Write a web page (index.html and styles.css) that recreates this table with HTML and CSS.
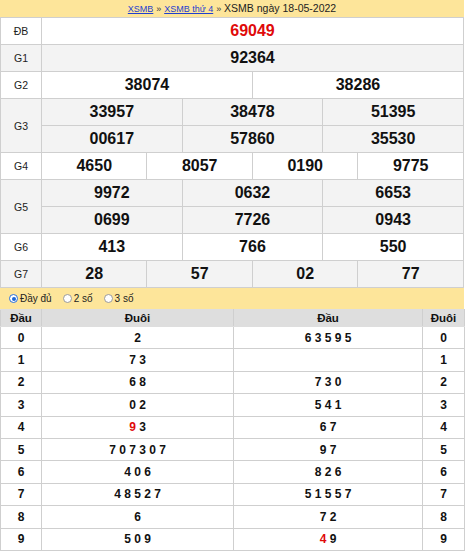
FILE: index.html
```html
<!DOCTYPE html>
<html lang="vi">
<head>
<meta charset="utf-8">
<title>XSMB ngày 18-05-2022</title>
<link rel="stylesheet" href="styles.css">
</head>
<body>
<div class="wrap">
  <div class="title">
    <a href="#" class="lnk">XSMB</a> <span class="sep">»</span> <a href="#" class="lnk">XSMB thứ 4</a> <span class="sep">»</span> <span class="ttl">XSMB ngày 18-05-2022</span>
  </div>
  <table class="kq">
    <colgroup><col class="c-lbl"><col span="12"></colgroup>
    <tr class="w"><td class="lbl">ĐB</td><td colspan="12" class="num db">69049</td></tr>
    <tr class="g"><td class="lbl">G1</td><td colspan="12" class="num">92364</td></tr>
    <tr class="w"><td class="lbl">G2</td><td colspan="6" class="num">38074</td><td colspan="6" class="num">38286</td></tr>
    <tr class="g"><td class="lbl" rowspan="2">G3</td><td colspan="4" class="num">33957</td><td colspan="4" class="num">38478</td><td colspan="4" class="num">51395</td></tr>
    <tr class="g"><td colspan="4" class="num">00617</td><td colspan="4" class="num">57860</td><td colspan="4" class="num">35530</td></tr>
    <tr class="w"><td class="lbl">G4</td><td colspan="3" class="num">4650</td><td colspan="3" class="num">8057</td><td colspan="3" class="num">0190</td><td colspan="3" class="num">9775</td></tr>
    <tr class="g"><td class="lbl" rowspan="2">G5</td><td colspan="4" class="num">9972</td><td colspan="4" class="num">0632</td><td colspan="4" class="num">6653</td></tr>
    <tr class="g"><td colspan="4" class="num">0699</td><td colspan="4" class="num">7726</td><td colspan="4" class="num">0943</td></tr>
    <tr class="w"><td class="lbl">G6</td><td colspan="4" class="num">413</td><td colspan="4" class="num">766</td><td colspan="4" class="num">550</td></tr>
    <tr class="g"><td class="lbl">G7</td><td colspan="3" class="num">28</td><td colspan="3" class="num">57</td><td colspan="3" class="num">02</td><td colspan="3" class="num">77</td></tr>
  </table>
  <div class="opts">
    <label class="opt"><span class="radio on"></span>Đầy đủ</label>
    <label class="opt"><span class="radio"></span>2 số</label>
    <label class="opt"><span class="radio"></span>3 số</label>
  </div>
  <table class="lt">
    <colgroup><col class="c1"><col class="c2"><col class="c3"><col class="c4"></colgroup>
    <tr class="hd"><th>Đầu</th><th>Đuôi</th><th>Đầu</th><th>Đuôi</th></tr>
    <tr><td>0</td><td>2</td><td>6 3 5 9 5</td><td>0</td></tr>
    <tr><td>1</td><td>7 3</td><td></td><td>1</td></tr>
    <tr><td>2</td><td>6 8</td><td>7 3 0</td><td>2</td></tr>
    <tr><td>3</td><td>0 2</td><td>5 4 1</td><td>3</td></tr>
    <tr><td>4</td><td><span class="red">9</span> 3</td><td>6 7</td><td>4</td></tr>
    <tr><td>5</td><td>7 0 7 3 0 7</td><td>9 7</td><td>5</td></tr>
    <tr><td>6</td><td>4 0 6</td><td>8 2 6</td><td>6</td></tr>
    <tr><td>7</td><td>4 8 5 2 7</td><td>5 1 5 5 7</td><td>7</td></tr>
    <tr><td>8</td><td>6</td><td>7 2</td><td>8</td></tr>
    <tr><td>9</td><td>5 0 9</td><td><span class="red">4</span> 9</td><td>9</td></tr>
  </table>
</div>
</body>
</html>
```
FILE: styles.css
```css
html, body {
  margin: 0;
  padding: 0;
  background: #fff;
}
body {
  font-family: "Liberation Sans", Arial, sans-serif;
  color: #111;
}
.wrap {
  width: 464px;
}
.title {
  background: #fde59a;
  height: 17px;
  line-height: 17px;
  text-align: center;
  font-size: 10.5px;
  color: #222;
  white-space: nowrap;
}
.title .lnk {
  color: #1e3fd0;
  text-decoration: underline;
  font-size: 9px;
}
.title .sep {
  font-size: 9px;
  color: #333;
}
table {
  border-collapse: collapse;
  width: 464px;
  table-layout: fixed;
}
.kq td {
  border: 1px solid #cfcfcf;
  height: 26px;
  padding: 0;
  text-align: center;
  vertical-align: middle;
}
.kq .c-lbl {
  width: 41px;
}
.kq tr.w td {
  background: #fff;
}
.kq tr.g td {
  background: #f3f3f3;
}
.kq .lbl {
  font-size: 10.5px;
  color: #222;
}
.kq .num {
  font-size: 16px;
  font-weight: bold;
  color: #111;
}
.kq .db {
  color: #e00a0a;
}
.opts {
  background: #fde59a;
  height: 21px;
  display: flex;
  align-items: center;
  gap: 11px;
  padding-left: 9px;
  font-size: 10px;
  color: #222;
}
.opt {
  display: inline-flex;
  align-items: center;
  gap: 2px;
}
.radio {
  width: 7px;
  height: 7px;
  border: 1px solid #9a9a9a;
  border-radius: 50%;
  background: #fff;
  box-sizing: content-box;
  position: relative;
}
.radio.on {
  border-color: #2a6fd6;
}
.radio.on::after {
  content: "";
  position: absolute;
  left: 1.5px;
  top: 1.5px;
  width: 4px;
  height: 4px;
  border-radius: 50%;
  background: #1a66d8;
}
.lt .c1 { width: 41px; }
.lt .c2 { width: 192px; }
.lt .c3 { width: 189px; }
.lt .c4 { width: 42px; }
.lt th {
  background: #dedede;
  font-size: 11.5px;
  font-weight: bold;
  color: #111;
  height: 16px;
  padding: 0;
  border: 1px solid #dedede;
  border-left-color: #cfcfcf;
  border-right-color: #cfcfcf;
}
.lt td {
  border: 1px solid #cfcfcf;
  height: 21.4px;
  padding: 0;
  text-align: center;
  font-size: 12px;
  font-weight: bold;
  color: #111;
}
.lt .red {
  color: #e00a0a;
}
```
